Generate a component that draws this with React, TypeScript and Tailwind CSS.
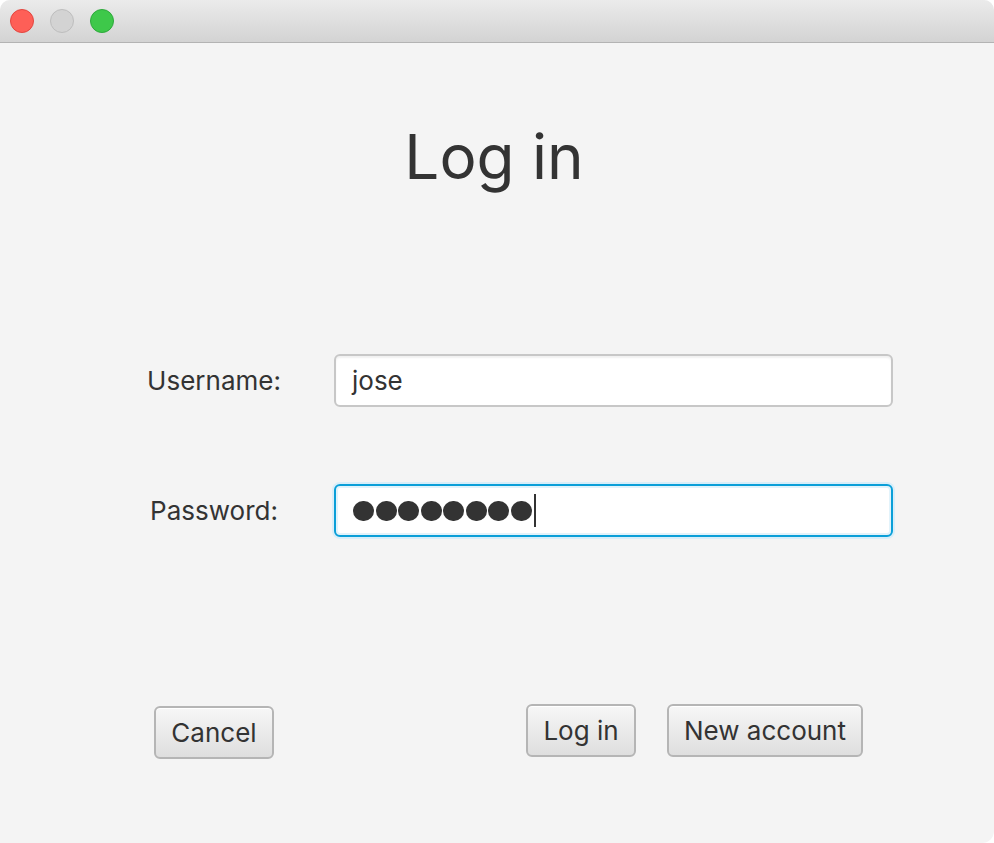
import React from "react";

const font = { fontFamily: "Inter, 'Liberation Sans', sans-serif" };

function TrafficLights() {
  return (
    <div className="flex items-center gap-4 pl-[10px]">
      <span className="h-6 w-6 rounded-full border border-[#e2463f] bg-[#fe5f57]" />
      <span className="h-6 w-6 rounded-full border border-[#bdbdbd] bg-[#d3d3d3]" />
      <span className="h-6 w-6 rounded-full border border-[#2ea83c] bg-[#3ec84a]" />
    </div>
  );
}

function Button({ label, className = "" }: { label: string; className?: string }) {
  return (
    <button
      type="button"
      className={`h-[53px] rounded-md border-2 border-[#b5b5b5] bg-gradient-to-b from-[#f7f7f7] to-[#dedede] text-[26px] text-[#333333] shadow-[inset_0_1px_0_#ffffff] ${className}`}
    >
      {label}
    </button>
  );
}

export default function App() {
  return (
    <div className="h-[843px] w-[994px] overflow-hidden bg-white" style={font}>
      <div className="flex h-full flex-col overflow-hidden rounded-t-[10px] rounded-br-[12px] bg-[#f4f4f4]">
        {/* title bar */}
        <div className="flex h-[43px] shrink-0 items-center border-b border-[#b3b3b3] bg-gradient-to-b from-[#ebebeb] to-[#d3d3d3] pb-[1px]">
          <TrafficLights />
        </div>

        <h1 className="mt-[78px] pr-[6px] text-center text-[62px] leading-[72px] text-[#333333]">
          Log in
        </h1>

        {/* form */}
        <div className="mt-[161px] grid grid-cols-[180px_559px] items-center gap-x-[30px] gap-y-[77px] pl-[124px]">
          <label className="text-center text-[26px] text-[#333333]">Username:</label>
          <div className="flex h-[53px] items-center rounded-md border-2 border-[#c7c7c7] bg-white pl-4 text-[26px] text-[#333333] shadow-[inset_0_2px_2px_rgba(0,0,0,0.06)]">
            jose
          </div>

          <label className="text-center text-[26px] text-[#333333]">Password:</label>
          <div className="flex h-[53px] items-center rounded-md border-2 border-[#0b9fd8] bg-white pl-[17px] shadow-[0_0_0_2px_#d8eef9,inset_0_0_0_2px_#e2f3fb]">
            <div className="flex gap-[1.5px]">
              {Array.from({ length: 8 }).map((_, i) => (
                <span key={i} className="h-[20px] w-[21px] rounded-full bg-[#333333]" />
              ))}
            </div>
            <span className="ml-[2px] h-[33px] w-[2px] bg-[#333333]" />
          </div>
        </div>

        {/* buttons */}
        <div className="mt-[167px] flex items-start pl-[154px]">
          <Button label="Cancel" className="mt-[2px] w-[120px]" />
          <Button label="Log in" className="ml-[252px] w-[110px]" />
          <Button label="New account" className="ml-[31px] w-[196px]" />
        </div>
      </div>
    </div>
  );
}
